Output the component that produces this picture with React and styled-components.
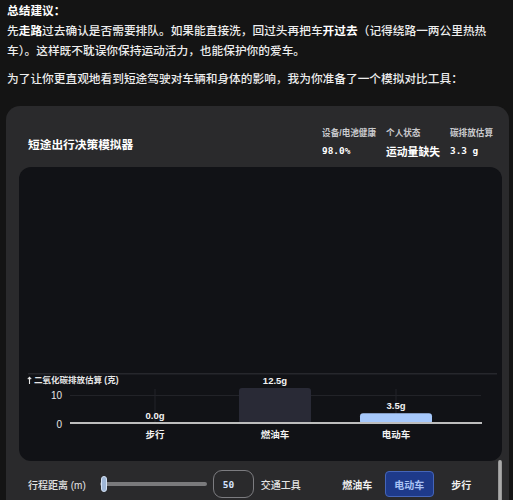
import styled, { createGlobalStyle } from "styled-components";

const GlobalStyle = createGlobalStyle`
  html, body {
    margin: 0;
    padding: 0;
    background: #141414;
    overflow: hidden;
  }

  body {
    font-family: "Liberation Sans", "Noto Sans CJK SC", sans-serif;
    color: #ececec;
  }
`;

const Page = styled.div`
  height: 500px;
  padding-top: 1px;
  overflow: hidden;
`;

const Text = styled.div`
  padding: 0 8px 0 7px;
  font-size: 11.7px;
  line-height: 20px;
  font-weight: 500;
  color: #ededed;

  p {
    margin: 0;
  }

  p + p {
    margin-top: 8px;
  }

  b {
    font-weight: 700;
    color: #fff;
  }
`;

const Heading = styled.div`
  font-weight: 700;
  color: #fff;
`;

const Card = styled.div`
  margin: 17px 4px 0 6px;
  background: #2a2a2c;
  border-radius: 14px;
  height: 420px;
  display: flex;
  flex-direction: column;
  position: relative;
`;

const Header = styled.div`
  display: flex;
  align-items: center;
  justify-content: space-between;
  padding: 20px 16px 0 22px;
  height: 34px;
`;

const Title = styled.h3`
  margin: 0;
  font-size: 11.7px;
  font-weight: 700;
  color: #fff;
`;

const Stats = styled.div`
  display: flex;
  gap: 10px;
`;

const Stat = styled.div`
  display: flex;
  flex-direction: column;
  gap: 5px;
`;

const StatLabel = styled.span`
  font-size: 8.6px;
  font-weight: 700;
  color: #c9c9cc;
  line-height: 11px;
`;

const StatValue = styled.span`
  font-family: ${(p) =>
    p.$mono
      ? `"DejaVu Sans Mono", "Liberation Mono", monospace`
      : `"Noto Sans CJK SC", sans-serif`};
  font-size: ${(p) => (p.$mono ? "9.4px" : "10.8px")};
  font-weight: 700;
  color: #fff;
  line-height: 14px;
`;

const ChartArea = styled.div`
  margin: 7px 7px 0 13px;
  height: 294px;
  background: #111216;
  border-radius: 12px;
  display: flex;
  flex-direction: column;
  justify-content: flex-end;
  padding-bottom: 13px;
  box-sizing: border-box;
`;

const Plot = styled.svg`
  display: block;
  font-family: "Liberation Sans", "Noto Sans CJK SC", sans-serif;
`;

const Controls = styled.div`
  display: flex;
  align-items: center;
  padding: 9px 0 0 22px;
  height: 28px;
`;

const Label = styled.span`
  font-size: 10px;
  color: #e4e4e4;
  font-weight: 500;
  white-space: nowrap;
`;

const Slider = styled.div`
  margin-left: 14px;
  width: 107px;
  height: 4px;
  border-radius: 2px;
  background: #7a7a7c;
  position: relative;
`;

const Thumb = styled.div`
  position: absolute;
  left: 1px;
  top: -6px;
  width: 4px;
  height: 14px;
  border-radius: 3px;
  background: #9fb6d6;
  border: 1px solid #d4e2f5;
`;

const NumberBox = styled.div`
  margin: 0 7px 0 6px;
  width: 41px;
  height: 28px;
  box-sizing: border-box;
  border: 1px solid #7c7c80;
  border-radius: 9px;
  display: flex;
  align-items: center;
  padding-left: 9px;
  font-family: "DejaVu Sans Mono", "Liberation Mono", monospace;
  font-size: 9.5px;
  font-weight: 700;
  color: #d6e4ff;
`;

const Modes = styled.div`
  display: flex;
  gap: 3px;
  margin-left: 32px;
`;

const Mode = styled.div`
  width: 49px;
  height: 26px;
  box-sizing: border-box;
  display: flex;
  align-items: center;
  justify-content: center;
  font-size: 10px;
  font-weight: 700;
  border-radius: 4px;
  color: ${(p) => (p.$active ? "#a9c2f5" : "#f0f0f0")};
  background: ${(p) => (p.$active ? "#1e3a8a" : "transparent")};
  border: 1px solid ${(p) => (p.$active ? "#4565b8" : "transparent")};
`;

const ScrollThumb = styled.div`
  position: absolute;
  right: 7px;
  top: 354px;
  width: 4px;
  height: 60px;
  border-radius: 2px;
  background: linear-gradient(90deg, #8d8d8d, #b4b4b4, #8d8d8d);
`;

const stats = [
  { label: "设备/电池健康", value: "98.0%", mono: true },
  { label: "个人状态", value: "运动量缺失" },
  { label: "碳排放估算", value: "3.3 g", mono: true },
];

const bars = [
  { name: "步行", value: 0, x: 136, fill: "#a6c8fb" },
  { name: "燃油车", value: 12.5, x: 256, fill: "#292a36" },
  { name: "电动车", value: 3.5, x: 377, fill: "#a6c8fb" },
];

const base = 50;
const scale = 2.8;

function EmissionChart() {
  return (
    <Plot width="483" height="75" viewBox="0 0 483 75">
      <line x1="9" y1="0.75" x2="478" y2="0.75" stroke="#26272c" strokeWidth="1.5" />
      {/* y-axis arrow */}
      <path d="M10.5 11V4.5M8.8 6.2L10.5 4.3L12.2 6.2" stroke="#e6e6e6" strokeWidth="1.1" fill="none" />
      <text x="15" y="10" fontSize="8.5" fontWeight="700" fill="#e6e6e6">
        二氧化碳排放估算 (克)
      </text>
      <line x1="51" y1="22.5" x2="462" y2="22.5" stroke="#222328" />
      {bars.map((b) => (
        <line key={b.name} x1={b.x} y1="16" x2={b.x} y2={base} stroke="#222328" />
      ))}
      <text x="43" y="26" fontSize="10" textAnchor="end" fill="#e6e6e6">10</text>
      <text x="43" y="55" fontSize="10" textAnchor="end" fill="#e6e6e6">0</text>
      {bars.map((b) => {
        const h = b.value * scale;
        return (
          <g key={b.name + "-bar"}>
            {h > 0 && (
              <rect x={b.x - 36} y={base - h} width="72" height={h + 1} rx="3" fill={b.fill} />
            )}
            <text x={b.x} y={base - h - 4} fontSize="9.5" fontWeight="700" textAnchor="middle" fill="#f2f2f2">
              {b.value.toFixed(1)}g
            </text>
            <text x={b.x} y="65" fontSize="9.5" fontWeight="700" textAnchor="middle" fill="#f2f2f2">
              {b.name}
            </text>
          </g>
        );
      })}
      <line x1="51" y1={base} x2="463" y2={base} stroke="#bdbdbd" strokeWidth="2" />
    </Plot>
  );
}

export default function App() {
  return (
    <Page>
      <GlobalStyle />
      <Text>
        <Heading>总结建议：</Heading>
        <p>
          先<b>走路</b>过去确认是否需要排队。如果能直接洗，回过头再把车<b>开过去</b>（记得绕路一两公里热热车）。这样既不耽误你保持运动活力，也能保护你的爱车。
        </p>
        <p>为了让你更直观地看到短途驾驶对车辆和身体的影响，我为你准备了一个模拟对比工具：</p>
      </Text>
      <Card>
        <Header>
          <Title>短途出行决策模拟器</Title>
          <Stats>
            {stats.map((s) => (
              <Stat key={s.label}>
                <StatLabel>{s.label}</StatLabel>
                <StatValue $mono={s.mono}>{s.value}</StatValue>
              </Stat>
            ))}
          </Stats>
        </Header>
        <ChartArea>
          <EmissionChart />
        </ChartArea>
        <Controls>
          <Label>行程距离 (m)</Label>
          <Slider>
            <Thumb />
          </Slider>
          <NumberBox>50</NumberBox>
          <Label>交通工具</Label>
          <Modes>
            <Mode>燃油车</Mode>
            <Mode $active>电动车</Mode>
            <Mode>步行</Mode>
          </Modes>
        </Controls>
        <ScrollThumb />
      </Card>
    </Page>
  );
}
